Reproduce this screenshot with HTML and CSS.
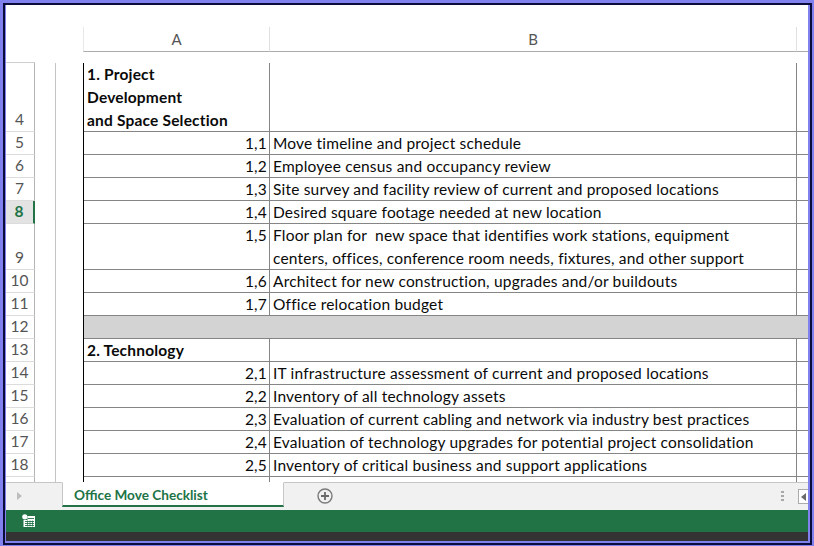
FILE: index.html
```html
<!DOCTYPE html>
<html>
<head>
<meta charset="utf-8">
<title>Office Move Checklist</title>
<link rel="stylesheet" href="styles.css">
</head>
<body>
<div class="frame">
  <div class="edge">
    <div class="window">
      <div class="colbar">
        <div class="corner"></div>
        <div class="colhead a">A</div>
        <div class="colhead b">B</div>
        <div class="colrest"></div>
      </div>
      <div class="gap-row"><div class="gap-left"></div></div>
      <div class="sheet">
        <div class="row h68"><div class="num">4</div><div class="outline"></div><div class="cell a head">1. Project<br>Development<br>and Space Selection</div><div class="cell b"></div><div class="rest"></div></div>
        <div class="row"><div class="num">5</div><div class="outline"></div><div class="cell a val">1,1</div><div class="cell b">Move timeline and project schedule</div><div class="rest"></div></div>
        <div class="row"><div class="num">6</div><div class="outline"></div><div class="cell a val">1,2</div><div class="cell b">Employee census and occupancy review</div><div class="rest"></div></div>
        <div class="row"><div class="num">7</div><div class="outline"></div><div class="cell a val">1,3</div><div class="cell b">Site survey and facility review of current and proposed locations</div><div class="rest"></div></div>
        <div class="row"><div class="num active">8</div><div class="outline"></div><div class="cell a val">1,4</div><div class="cell b">Desired square footage needed at new location</div><div class="rest"></div></div>
        <div class="row h46"><div class="num">9</div><div class="outline"></div><div class="cell a val">1,5</div><div class="cell b">Floor plan for&nbsp; new space that identifies work stations, equipment<br>centers, offices, conference room needs, fixtures, and other support</div><div class="rest"></div></div>
        <div class="row"><div class="num">10</div><div class="outline"></div><div class="cell a val">1,6</div><div class="cell b">Architect for new construction, upgrades and/or buildouts</div><div class="rest"></div></div>
        <div class="row"><div class="num">11</div><div class="outline"></div><div class="cell a val">1,7</div><div class="cell b">Office relocation budget</div><div class="rest"></div></div>
        <div class="row"><div class="num">12</div><div class="outline"></div><div class="band"></div></div>
        <div class="row"><div class="num">13</div><div class="outline"></div><div class="cell a head">2. Technology</div><div class="cell b"></div><div class="rest"></div></div>
        <div class="row"><div class="num">14</div><div class="outline"></div><div class="cell a val">2,1</div><div class="cell b">IT infrastructure assessment of current and proposed locations</div><div class="rest"></div></div>
        <div class="row"><div class="num">15</div><div class="outline"></div><div class="cell a val">2,2</div><div class="cell b">Inventory of all technology assets</div><div class="rest"></div></div>
        <div class="row"><div class="num">16</div><div class="outline"></div><div class="cell a val">2,3</div><div class="cell b">Evaluation of current cabling and network via industry best practices</div><div class="rest"></div></div>
        <div class="row"><div class="num">17</div><div class="outline"></div><div class="cell a val">2,4</div><div class="cell b">Evaluation of technology upgrades for potential project consolidation</div><div class="rest"></div></div>
        <div class="row"><div class="num">18</div><div class="outline"></div><div class="cell a val">2,5</div><div class="cell b">Inventory of critical business and support applications</div><div class="rest"></div></div>
        <div class="row tail"><div class="num"></div><div class="outline"></div><div class="cell a"></div><div class="cell b"></div><div class="rest"></div></div>
      </div>
      <div class="tabbar">
        <div class="nav"><svg class="arrow" width="5" height="8" viewBox="0 0 5 8"><path d="M0 0l5 4-5 4z"/></svg></div>
        <div class="tab">Office Move Checklist</div>
        <div class="add"><svg width="16" height="16" viewBox="0 0 16 16"><circle cx="8" cy="8" r="7" fill="none" stroke="#7a7a7a" stroke-width="1.4"/><path d="M8 4v8M4 8h8" stroke="#6a6a6a" stroke-width="1.8"/></svg></div>
        <div class="dots"><i></i><i></i><i></i></div>
        <div class="scroll"><svg width="5" height="8" viewBox="0 0 5 8"><path d="M5 0L0 4l5 4z" fill="#6a6a6a"/></svg></div>
      </div>
      <div class="status">
        <svg width="14" height="14" viewBox="0 0 14 14"><circle cx="2.8" cy="2.8" r="2.6" fill="#fff"/><path d="M5.5 2H13v11H1.5V6h4z" fill="#fff"/><path d="M6 4.5h6M3 7.5h9M3 9.5h9M3 11.5h9" stroke="#217346" stroke-width=".9"/><path d="M5.5 6.5v6M8 6.5v6M10.5 6.5v6" stroke="#217346" stroke-width=".7"/></svg>
      </div>
      <div class="darkbar"></div>
    </div>
  </div>
</div>
</body>
</html>
```
FILE: styles.css
```css
* { box-sizing: border-box; }
html, body { margin: 0; padding: 0; background: #8080ee; }
body { width: 814px; height: 546px; overflow: hidden; font-family: Lato, "Liberation Sans", sans-serif; }
.frame { width: 814px; height: 546px; padding: 3px 2px 1px 3px; }
.edge { width: 100%; height: 100%; border: 2px solid #0c0c3a; padding: 0 2px 2px 1px; background: #8080ee; }
.window { width: 100%; height: 100%; background: #fff; display: flex; flex-direction: column; overflow: hidden; }
.colbar { display: flex; height: 47px; flex: none; padding-top: 22px; }
.corner { width: 77px; }
.colhead { font-size: 15px; color: #555; text-align: center; line-height: 24px; border-right: 1px solid #e0e0e0; border-bottom: 1px solid #ababab; }
.colhead.a { width: 187px; border-left: 1px solid #e8e8e8; }
.colhead.b { width: 527px; }
.colrest { flex: 1; border-bottom: 1px solid #ababab; }
.gap-row { height: 11px; flex: none; }
.gap-left { width: 29px; height: 11px; border-bottom: 1px solid #cfcfcf; }
.sheet { flex: 1; min-height: 0; overflow: hidden; }
.row { display: flex; height: 23px; font-size: 15.5px; letter-spacing: .19px; color: #0a0a0a; line-height: 23px; }
.h68 { height: 69px; }
.h46 { height: 46px; }
.num { width: 29px; flex: none; border-right: 1px solid #b4b4b4; border-bottom: 1px solid #dcdcdc; color: #555; text-align: center; display: flex; align-items: flex-end; justify-content: center; padding-right: 1px; letter-spacing: 0; }
.num.active { background: #e3e3e3; color: #217346; font-weight: 700; border-right: 2px solid #217346; }
.outline { width: 49px; flex: none; border-right: 1px solid #000; background: linear-gradient(#c4c4c4, #c4c4c4) 20px 0 / 1px 100% no-repeat; }
.cell { border-bottom: 1px solid #858585; border-right: 1px solid #858585; white-space: nowrap; }
.cell.a { width: 186px; flex: none; padding: 0 2px 0 3px; }
.cell.b { width: 527px; flex: none; padding-left: 3px; }
.val { text-align: right; }
.head { font-weight: 700; }
.rest { flex: 1; border-bottom: 1px solid #858585; }
.band { flex: 1; background: #d3d3d3; border-bottom: 1px solid #858585; }
.tail .cell, .tail .rest { border-bottom: 0; }
.tabbar { flex: none; height: 28px; display: flex; background: #f1f1f1; border-top: 1px solid #c6c6c6; }
.nav { width: 56px; height: 26px; display: flex; align-items: center; justify-content: center; padding-right: 30px; }
.arrow { fill: #bdbdbd; }
.tab { width: 222px; height: 25px; margin-top: -1px; background: #fff; border: 1px solid #c6c6c6; border-top: 1px solid #fff; border-bottom: 2px solid #217346; color: #217346; font-weight: 700; font-size: 13.6px; line-height: 25px; padding-left: 11px; }
.add { margin-left: 33px; display: flex; align-items: center; height: 26px; }
.dots { margin-left: auto; margin-right: 14px; display: flex; flex-direction: column; gap: 2px; justify-content: center; height: 26px; }
.dots i { width: 3px; height: 2px; background: #a8a8a8; display: block; }
.scroll { width: 10px; height: 15px; margin-top: 6px; border: 1px solid #ababab; border-right: 0; background: #fff; display: flex; align-items: center; justify-content: center; }
.status { flex: none; height: 22px; background: #217346; padding: 4px 0 0 16px; display: flex; }
.darkbar { flex: none; height: 9px; background: #333; }
```
